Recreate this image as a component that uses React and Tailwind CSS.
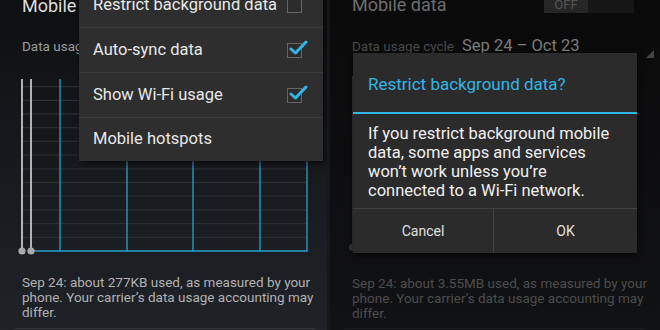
import React from "react";

const font = { fontFamily: "Roboto, 'Noto Sans', sans-serif" };

function Chart() {
  const hs = [];
  for (let k = 1; k <= 12; k++) hs.push(176 - 13.7 * k);
  return (
    <svg width="294" height="184" viewBox="0 0 294 184" className="block">
      {hs.map((y, i) => (
        <line key={i} x1="4" x2="289" y1={y} y2={y} stroke="#2a2d32" strokeWidth="1.3" />
      ))}
      {[42, 109, 175, 242, 289].map((x) => (
        <line key={x} x1={x} x2={x} y1="4" y2="176.5" stroke="#2aa0cf" strokeWidth="1.3" />
      ))}
      <line x1="13" x2="289.6" y1="176" y2="176" stroke="#2aa0cf" strokeWidth="1.3" />
      <line x1="4" x2="4" y1="4" y2="176" stroke="#e6e6e6" strokeWidth="1.5" />
      <line x1="13" x2="13" y1="4" y2="176" stroke="#e6e6e6" strokeWidth="1.5" />
      <circle cx="4" cy="176" r="3.6" fill="#a9a9a9" />
      <circle cx="13" cy="176" r="3.6" fill="#a9a9a9" />
    </svg>
  );
}

function Check({ checked }) {
  return (
    <div className="relative w-[15px] h-[15px] border border-[#666] bg-[#2c2c2c]">
      {checked && (
        <svg width="20" height="18" viewBox="0 0 20 18" className="absolute left-[1px] top-[-5px]">
          <path d="M2 10 L6.5 14 L17 3" fill="none" stroke="#33b5e5" strokeWidth="3" strokeLinecap="round" strokeLinejoin="round" />
        </svg>
      )}
    </div>
  );
}

function MenuItem({ label, check, last }) {
  return (
    <div className={"flex items-center justify-between pl-[14px] pr-[21px] " + (last ? "h-[43px]" : "h-[45px] border-b border-[#3c3c3c]")}>
      <span className="text-[16.5px] text-[#e8e8e8]">{label}</span>
      {check !== undefined && <Check checked={check} />}
    </div>
  );
}

export default function App() {
  return (
    <div className="flex w-[660px] h-[330px] overflow-hidden bg-black" style={font}>
      {/* Left panel */}
      <div className="relative w-[330px] h-[330px] overflow-hidden bg-gradient-to-b from-[#0e0f11] via-[#171a1d] to-[#1f2227] border-r-[3px] border-[#15171a]">
        <div className="flex flex-col pl-[22px]">
          <div className="h-[26px] mt-[-7px] leading-[26px] text-[18px] text-[#dedede]">Mobile data</div>
          <div className="h-[26px] mt-[14px] leading-[26px] text-[13.5px] text-[#9c9c9c]">Data usage cycle</div>
          <div className="mt-[16px] ml-[-4px]">
            <Chart />
          </div>
          <div className="mt-[16px] w-[296px] text-[13.5px] leading-[15px] text-[#b2b2b2]">
            Sep 24: about 277KB used, as measured by your phone. Your carrier’s data usage accounting may differ.
          </div>
        </div>
        <div className="absolute left-[15px] right-[12px] bottom-[1px] h-px bg-[#34373b]" />
        {/* Overflow menu */}
        <div className="absolute left-[79px] top-[-17px] w-[244px] bg-[#2e2e2e] shadow-[2px_3px_6px_rgba(0,0,0,0.6)]">
          <MenuItem label="Restrict background data" check={false} />
          <MenuItem label="Auto-sync data" check={true} />
          <MenuItem label="Show Wi-Fi usage" check={true} />
          <MenuItem label="Mobile hotspots" last />
        </div>
      </div>

      {/* Right panel */}
      <div className="relative w-[330px] h-[330px] overflow-hidden bg-gradient-to-b from-[#0a0a0b] to-[#111214]">
        <div className="flex flex-col pl-[22px]">
          <div className="flex items-start h-[26px] mt-[-8px]">
            <span className="leading-[26px] text-[18px] text-[#6e6e6e]">Mobile data</span>
            <div className="ml-auto mr-[26px] mt-[5px] flex w-[90px] h-[16px] bg-[#161616]">
              <div className="w-[44px] h-full bg-[#262626] flex items-center justify-center text-[13px] text-[#555]">OFF</div>
            </div>
          </div>
          <div className="relative flex items-center h-[26px] mt-[15px]">
            <span className="text-[13.5px] text-[#4a4a4a]">Data usage cycle</span>
            <span className="ml-[8px] text-[16.5px] text-[#7c7c7c]">Sep 24 – Oct 23</span>
            <svg width="8" height="8" className="absolute left-[294px] top-[17px]">
              <path d="M8 0 L8 8 L0 8 Z" fill="#444" />
            </svg>
          </div>
          <div className="relative h-[176px] mt-[17px]">
            <div className="absolute left-0 top-0 w-[1.5px] h-[172px] bg-[#3a3a3a]" />
            <div className="absolute left-[-3px] top-[168px] w-[7px] h-[7px] rounded-full bg-[#3a3a3a]" />
            <div className="absolute left-[6px] top-[169px] w-[7px] h-[7px] rounded-full bg-[#2e2e2e]" />
          </div>
          <div className="mt-[24px] w-[296px] text-[13.5px] leading-[15px] text-[#4d4d4d]">
            Sep 24: about 3.55MB used, as measured by your phone. Your carrier’s data usage accounting may differ.
          </div>
        </div>
        <div className="absolute left-[15px] right-[15px] bottom-[1px] h-px bg-[#1c1c1c]" />

        {/* Dialog */}
        <div className="absolute left-[23px] top-[53px] w-[284px] h-[200px] bg-[#2b2b2b] flex flex-col shadow-[0_2px_6px_rgba(0,0,0,0.7)]">
          <div className="h-[59px] flex items-center pl-[15px] pt-[4px] text-[17px] text-[#33b5e5]">Restrict background data?</div>
          <div className="h-[2px] bg-[#33b5e5]" />
          <div className="flex-1 pl-[15px] pr-[10px] pt-[10px] text-[16.5px] leading-[19px] text-[#f0f0f0]">
            If you restrict background mobile data, some apps and services won’t work unless you’re connected to a Wi-Fi network.
          </div>
          <div className="flex h-[45px] border-t border-[#424242]">
            <div className="w-[141px] flex items-center justify-center text-[14px] text-[#e0e0e0] border-r border-[#424242]">Cancel</div>
            <div className="flex-1 flex items-center justify-center text-[14px] text-[#e0e0e0]">OK</div>
          </div>
        </div>
      </div>
    </div>
  );
}
